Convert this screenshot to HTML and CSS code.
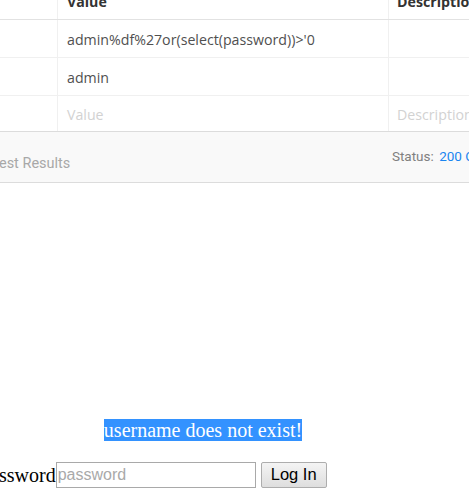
FILE: index.html
```html
<!DOCTYPE html>
<html>
<head>
<meta charset="utf-8">
<link rel="stylesheet" href="styles.css">
</head>
<body>
<div class="params">
  <div class="row head">
    <div class="cell key"></div>
    <div class="cell val">Value</div>
    <div class="cell desc">Description</div>
  </div>
  <div class="row">
    <div class="cell key"></div>
    <div class="cell val">admin%df%27or(select(password))&gt;'0</div>
    <div class="cell desc"></div>
  </div>
  <div class="row">
    <div class="cell key"></div>
    <div class="cell val">admin</div>
    <div class="cell desc"></div>
  </div>
  <div class="row ph">
    <div class="cell key"></div>
    <div class="cell val">Value</div>
    <div class="cell desc">Description</div>
  </div>
</div>
<div class="results">
  <div class="tab">Test Results</div>
  <div class="status">Status: <span class="code">200 OK</span></div>
</div>
<div class="frame">
  <div class="msg"><span class="sel">username does not exist!</span></div>
  <form class="login">
    <span class="lbl">Password</span><input class="pw" type="password" placeholder="password"><button class="btn" type="button">Log In</button>
  </form>
</div>
</body>
</html>
```
FILE: styles.css
```css
html, body {
  margin: 0;
  padding: 0;
  background: #fff;
  overflow: hidden;
}
body {
  width: 469px;
  height: 497px;
}
.params {
  margin-top: -18px;
  font-family: "Open Sans", sans-serif;
  font-size: 14.2px;
  color: #505050;
}
.row {
  display: flex;
  height: 37px;
  border-bottom: 1px solid #f0f0f0;
}
.row.head {
  border-bottom: 1px solid #e2e2e2;
  font-weight: 700;
  color: #333;
}
.row.ph {
  height: 35px;
  border-bottom: 1px solid #dcdcdc;
  color: #d2d2d2;
}
.cell {
  display: flex;
  align-items: center;
  padding-left: 9px;
  padding-top: 1px;
  white-space: nowrap;
  overflow: hidden;
  box-sizing: border-box;
}
.key {
  width: 58px;
  flex: none;
  border-right: 1px solid #f0f0f0;
}
.val {
  width: 331px;
  flex: none;
  border-right: 1px solid #f0f0f0;
}
.desc {
  flex: 1;
  padding-left: 8px;
}
.results {
  display: flex;
  justify-content: space-between;
  height: 50px;
  background: #f9f9f9;
  border-bottom: 1px solid #dcdcdc;
  font-family: Roboto, sans-serif;
  white-space: nowrap;
  overflow: hidden;
}
.tab {
  margin-left: -9px;
  padding-top: 23px;
  font-size: 14.5px;
  color: #a8a8a8;
}
.status {
  padding-top: 16px;
  margin-right: -14px;
  font-size: 13.5px;
  color: #808080;
}
.code {
  color: #1a85f0;
  margin-left: 2px;
}
.frame {
  padding-top: 236px;
  font-family: "Liberation Serif", "Times New Roman", serif;
  font-size: 20px;
  color: #000;
}
.msg {
  width: 406px;
  text-align: center;
  line-height: 22px;
}
.sel {
  background: #3392ff;
  color: #fff;
}
.login {
  display: flex;
  align-items: center;
  margin: 21px 0 0 -21px;
  white-space: nowrap;
}
.lbl {
  line-height: 22px;
}
.pw {
  box-sizing: border-box;
  width: 200px;
  height: 26px;
  margin: 0;
  padding: 1px 1px;
  border: 1px solid #a9a9a9;
  font-family: "Liberation Sans", Arial, sans-serif;
  font-size: 16px;
  outline: none;
}
.pw::placeholder {
  color: #a9a9a9;
}
.btn {
  box-sizing: border-box;
  width: 66px;
  height: 26px;
  margin-left: 5px;
  padding: 0 0 2px;
  border: 1px solid #adadad;
  border-radius: 2px;
  background: linear-gradient(#f4f4f4, #dedede);
  font-family: "Liberation Sans", Arial, sans-serif;
  font-size: 16.5px;
  color: #000;
}
```
